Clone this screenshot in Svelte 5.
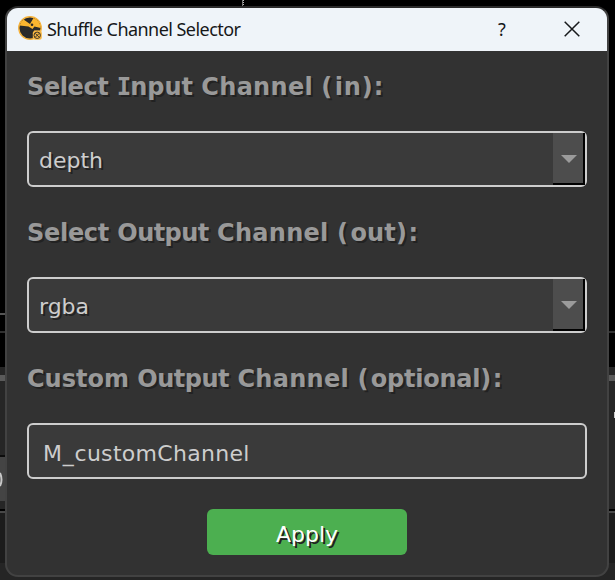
<script>
  // Each label is a list of [text, tracking, extra class] runs.
  const labels = [
    [['Select', -0.4], [' ', 0], ['I', -1.05, 'slab'], ['nput', 0], [' ', 0], ['Channel', 0.3], [' ', 0], ['(', 2.4], ['in', 0.9], [')', 1], [':', 0]],
    [['Select', -0.3], [' ', 0], ['Output', -0.57], [' ', 0], ['Channel', 0.3], [' ', 0], ['(', 2.4], ['out', 0.2], [')', 1.5], [':', 0]],
    [['Custom', 0], [' ', 0], ['Output', -0.5], [' ', 0], ['Channel', 0.3], [' ', 0], ['(', 2.4], ['optional', -0.25], [')', 1.5], [':', 0]]
  ];
  const values = ['depth', 'rgba'];
</script>

{#snippet label(runs)}
  <div class="label">{#each runs as [text, tracking, kind]}<span class={kind} style="letter-spacing: {tracking}px">{text}</span>{/each}</div>
{/snippet}

<div class="desktop">
  <svg class="backdrop" width="615" height="580" aria-hidden="true">
    <rect width="615" height="580" fill="#000" />
    <path d="M242.5 0v8" stroke="#777" />
    <path d="M243.5 0v8" stroke="#bbb" stroke-dasharray="1 1" />
    <rect y="313" width="8" height="2" fill="#555" />
    <rect y="331" width="615" height="2" fill="#303030" />
    <rect y="367" width="615" height="213" fill="#262626" />
    <rect y="375" width="615" height="6" fill="#5a5a5a" />
    <rect x="614" y="412" width="1" height="6" fill="#ccc" />
    <rect y="455" width="8" height="2" fill="#0c0c0c" />
    <rect y="457" width="8" height="44" fill="#444" />
    <path d="M0 473q3 7 0 13" fill="none" stroke="#c8c8c8" stroke-width="2" />
    <rect y="501" width="8" height="8" fill="#262626" />
    <rect y="509" width="615" height="2" fill="#000" />
    <rect y="511" width="615" height="2" fill="#484848" />
    <rect y="513" width="615" height="50" fill="#1c1c1c" />
    <rect y="563" width="615" height="17" fill="#252525" />
  </svg>

  <main class="dialog">
    <header>
      <svg class="logo" width="24" height="24" viewBox="0 0 24 24">
        <circle cx="12" cy="12" r="11.2" fill="#2b2a2a" stroke="#f5b23c" stroke-width="1.4" />
        <path d="M1.500 9.500Q2.500 6 5.500 3.500L12 8 15.500 2Q18.500 3 20.500 5.500 22.500 8.500 22.600 12L16.500 10.500 14.500 13 10.500 10.500Z" fill="#fbb52f" />
        <circle cx="14" cy="8.800" r="1.300" fill="#2b2a2a" />
        <path d="M16 14h7v9h-8z" fill="#f9b843" opacity=".5" />
        <rect x="14.800" y="14.800" width="9" height="9" rx="2.500" fill="#f9b843" />
        <circle cx="19.200" cy="19.300" r="3.200" fill="none" stroke="#403526" />
        <path d="m17.200 17.300 4 4m0-4-4 4" stroke="#403526" />
      </svg>
      <h1>Shuffle Channel Selector</h1>
      <span class="help">?</span>
      <svg class="close" width="16" height="16" viewBox="0 0 16 16">
        <path d="m.7.7 14.600 14.600M15.300.7.7 15.300" stroke="#17191b" stroke-width="1.500" />
      </svg>
    </header>
    <section class="form">
      {#each values as value, i}
        {@render label(labels[i])}
        <div class="field select">
          <span>{value}</span>
          <div class="drop">
            <svg width="16" height="8" viewBox="0 0 16 8"><path d="M0 0h16L8 8Z" fill="#9b9b9b" /></svg>
          </div>
        </div>
      {/each}
      {@render label(labels[2])}
      <div class="field input"><span><span class="prefix">M_</span>customChannel</span></div>
      <button><span>Apply</span></button>
    </section>
  </main>
</div>

<style>
  :global(body) { background: #000; overflow: hidden; }
  .desktop { position: relative; width: 615px; height: 580px; padding: 6px 0 0 5px; box-sizing: border-box; }
  .backdrop { position: absolute; inset: 0; display: block; }
  .dialog {
    position: relative; box-sizing: border-box; width: 604px; height: 571px;
    border: 2px solid #424242; border-top-color: #2b2b2b; border-radius: 13px;
    overflow: hidden; background: #323232;
  }
  header { display: flex; align-items: center; height: 43px; background: #eff4f9; padding-left: 11px; }
  .logo { flex: none; margin-top: -3px; }
  h1 {
    margin: 0 0 0 5px; width: 451px; flex: none; white-space: nowrap;
    font: 400 18px/43px "Noto Sans", sans-serif; color: #161819; letter-spacing: -.55px;
  }
  .help { width: 12px; font: 400 18px/43px "Noto Sans", sans-serif; color: #161819; }
  .close { margin-left: 54px; margin-top: -2px; }
  .form { display: flex; flex-direction: column; padding: 14px 20px 0; font-family: "DejaVu Sans", sans-serif; }
  .label {
    height: 44px; margin-bottom: 22px; line-height: 44px; white-space: pre;
    font-size: 24px; font-weight: 700; color: #999; text-shadow: 2px 2px 0 #222;
  }
  .slab { font-family: "DejaVu Sans Mono", monospace; }
  .field {
    box-sizing: border-box; height: 56px; border: 2px solid #cdcdcd; border-radius: 6px;
    background: #3a3a3a; color: #cdcdcd; font-size: 22px; line-height: 56px; margin-bottom: 24px;
    padding-left: 10px; display: flex; justify-content: space-between;
  }
  .select { text-shadow: 2px 2px 0 #222; }
  .input { padding-left: 14px; line-height: 57px; letter-spacing: .3px; }
  .prefix { letter-spacing: .75px; }
  .drop {
    box-sizing: border-box; width: 32px; height: 52px; padding: 2px 0 0 2px;
    background: #4d4d4d; border-right: 2px solid #000; border-bottom: 2px solid #000;
    display: flex; align-items: center; justify-content: center;
  }
  button {
    align-self: center; width: 200px; height: 46px; margin-top: 6px; border: 0; border-radius: 6px;
    background: #4caf50; color: #fff; font: 22px/46px "DejaVu Sans", sans-serif; padding: 3px 0 0;
    text-shadow: 2px 2px 0 #222;
  }
</style>
